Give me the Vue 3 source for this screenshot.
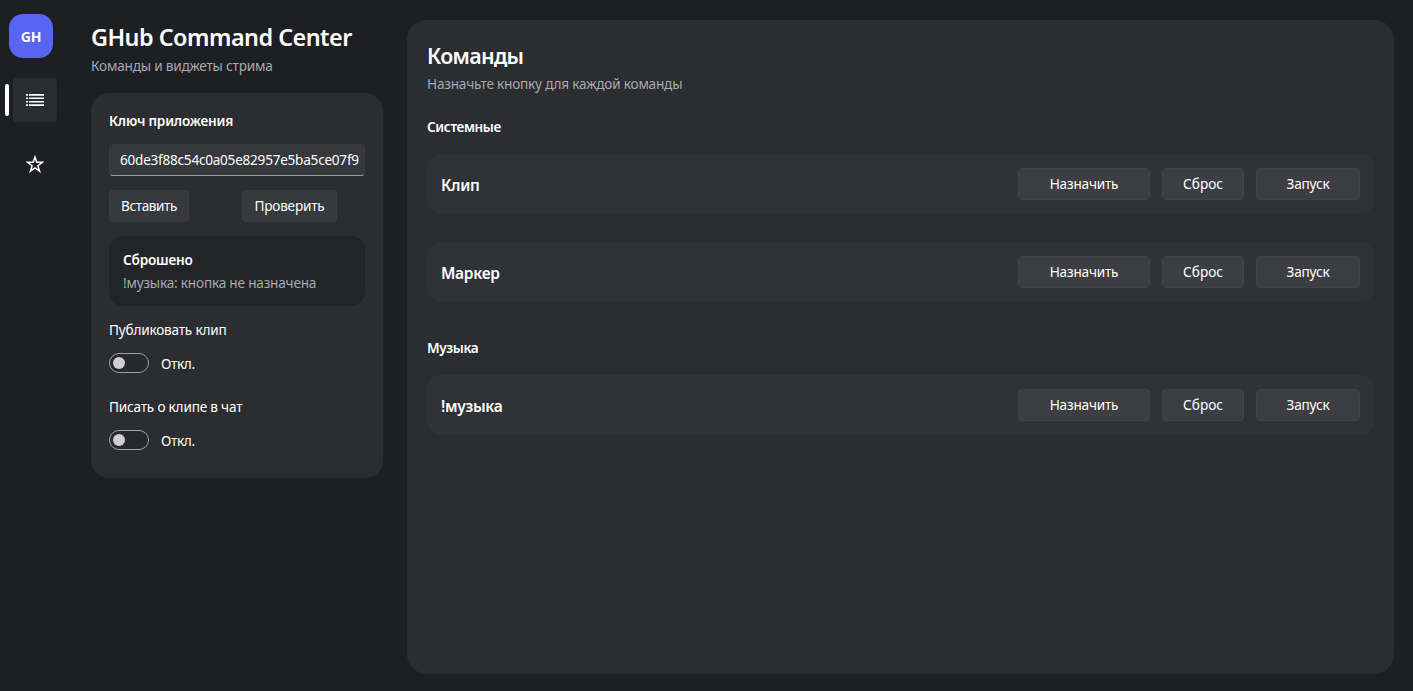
<template>
  <div class="app">
    <nav class="rail">
      <div class="logo">GH</div>
      <div class="rail-item active">
        <span class="rail-marker"></span>
        <button class="rail-button" aria-label="Команды">
          <svg viewBox="0 0 18 14" width="18" height="14" fill="currentColor">
            <path d="M0 1.1h2v1.7H0zM0 4.5h2v1.6H0zM0 7.9h2v1.6H0zM0 11.2h2v1.7H0zM3 1.1h15v1.7H3zM3 4.5h15v1.6H3zM3 7.9h15v1.6H3zM3 11.2h15v1.7H3z"/>
          </svg>
        </button>
      </div>
      <div class="rail-item">
        <span class="rail-marker"></span>
        <button class="rail-button" aria-label="Избранное">
          <svg viewBox="0 0 18 18" width="18" height="18" fill="none" stroke="currentColor" stroke-width="1.5">
            <path d="M9 2l1.8 5.2h5.6l-4.5 3.5 1.7 5.5L9 12.9l-4.6 3.3 1.7-5.5-4.5-3.5h5.6z"/>
          </svg>
        </button>
      </div>
    </nav>

    <aside class="sidebar">
      <h1 class="app-title">GHub Command Center</h1>
      <p class="app-subtitle">Команды и виджеты стрима</p>

      <section class="settings">
        <h3 class="label">Ключ приложения</h3>
        <input v-model="appKey" class="key-input" type="text" spellcheck="false" />
        <div class="key-actions">
          <div><button class="btn paste">Вставить</button></div>
          <div><button class="btn check">Проверить</button></div>
        </div>
        <div class="status">
          <div class="status-title">{{ status.title }}</div>
          <div class="status-text">{{ status.text }}</div>
        </div>
        <div v-for="option in options" :key="option.id" class="option">
          <div class="option-label">{{ option.label }}</div>
          <div class="option-control">
            <button
              class="toggle"
              :class="{ on: option.enabled }"
              role="switch"
              :aria-checked="option.enabled"
              @click="option.enabled = !option.enabled"
            >
              <span class="toggle-knob"></span>
            </button>
            <span class="option-state">{{ option.enabled ? 'Вкл.' : 'Откл.' }}</span>
          </div>
        </div>
      </section>
    </aside>

    <main class="panel">
      <h2 class="panel-title">Команды</h2>
      <p class="panel-subtitle">Назначьте кнопку для каждой команды</p>

      <section v-for="group in groups" :key="group.title" class="group">
        <h3 class="group-title">{{ group.title }}</h3>
        <div v-for="name in group.commands" :key="name" class="command">
          <span class="command-name">{{ name }}</span>
          <button class="btn assign" @click="assign(name)">Назначить</button>
          <button class="btn reset" @click="reset(name)">Сброс</button>
          <button class="btn run">Запуск</button>
        </div>
      </section>
    </main>
  </div>
</template>

<script setup>
import { reactive, ref } from 'vue'

const appKey = ref('60de3f88c54c0a05e82957e5ba5ce07f9')

const status = reactive({
  title: 'Сброшено',
  text: '!музыка: кнопка не назначена'
})

const options = reactive([
  { id: 'publish', label: 'Публиковать клип', enabled: false },
  { id: 'chat', label: 'Писать о клипе в чат', enabled: false }
])

const groups = [
  { title: 'Системные', commands: ['Клип', 'Маркер'] },
  { title: 'Музыка', commands: ['!музыка'] }
]

const assign = (name) => {
  status.title = 'Назначение'
  status.text = `${name}: нажмите кнопку`
}

const reset = (name) => {
  status.title = 'Сброшено'
  status.text = `${name}: кнопка не назначена`
}
</script>

<style>
body {
  background: #1e1f22;
}
</style>

<style scoped>
.app {
  display: flex;
  box-sizing: border-box;
  height: 100vh;
  background: #1e1f23;
  color: #fff;
  font-family: "Segoe UI", "Noto Sans", "Open Sans", sans-serif;
  font-size: 13.6px;
  line-height: 20px;
  letter-spacing: -0.2px;
  overflow: hidden;
}

h1, h2, h3, p {
  margin: 0;
}

button, input {
  font: inherit;
  letter-spacing: inherit;
  color: inherit;
  box-sizing: border-box;
}

/* Navigation rail */
.rail {
  flex: 0 0 91px;
  padding-top: 14px;
}

.logo {
  width: 44px;
  height: 44px;
  margin: 0 0 20px 9px;
  border-radius: 14px;
  background: #5865f2;
  font-size: 14px;
  font-weight: 700;
  line-height: 46px;
  text-align: center;
}

.rail-item {
  display: flex;
  align-items: center;
  gap: 4px;
  padding-left: 5px;
  margin-bottom: 20px;
}

.rail-marker {
  width: 4px;
  height: 32px;
  border-radius: 2px;
}

.active .rail-marker {
  background: #fff;
}

.rail-button {
  display: flex;
  align-items: center;
  justify-content: center;
  width: 44px;
  height: 44px;
  padding: 0;
  border: none;
  border-radius: 4px;
  background: none;
}

.active .rail-button {
  background: #2b2d31;
}

/* Left column */
.sidebar {
  flex: 0 0 292px;
  padding-top: 20px;
}

.app-title {
  font-size: 23.4px;
  font-weight: 600;
  line-height: 35px;
  letter-spacing: -0.52px;
  white-space: nowrap;
}

.app-subtitle,
.panel-subtitle {
  padding-top: 1px;
  color: #a7a9ae;
}

.settings {
  margin-top: 17px;
  padding: 18px 18px 28px;
  border-radius: 18px;
  background: #2b2d31;
}

.label {
  font-size: 13.6px;
  font-weight: 600;
}

.key-input {
  display: block;
  width: 100%;
  height: 32px;
  margin-top: 13px;
  padding: 0 5px 1px 10px;
  border: 1px solid #3a3b3f;
  border-bottom-color: #9a9b9d;
  border-radius: 4px;
  background: #37383c;
  letter-spacing: -0.25px;
  outline: none;
}

.key-actions {
  display: grid;
  grid-template-columns: 133px 1fr;
  margin-top: 14px;
}

.btn {
  display: block;
  height: 32px;
  padding: 0;
  border: 1px solid #3d3e42;
  border-radius: 4px;
  background: #38393d;
  line-height: 20px;
  white-space: nowrap;
}

.paste {
  width: 80px;
  letter-spacing: -0.4px;
}

.check {
  width: 95px;
}

.status {
  margin-top: 14px;
  padding: 14px 14px 13px;
  border-radius: 14px;
  background: #232428;
}

.status-title {
  font-weight: 600;
}

.status-text {
  margin-top: 3px;
  color: #a7a9ae;
}

.option {
  margin-top: 14px;
}

.option + .option {
  margin-top: 24px;
}

.option-control {
  display: flex;
  align-items: center;
  gap: 12px;
  height: 20px;
  margin-top: 13px;
}

.toggle {
  display: flex;
  align-items: center;
  width: 40px;
  height: 20px;
  padding: 0 3px;
  border: 1px solid #a0a1a3;
  border-radius: 10px;
  background: #27292c;
}

.toggle.on {
  justify-content: flex-end;
  background: #5865f2;
}

.toggle-knob {
  width: 12px;
  height: 12px;
  border-radius: 50%;
  background: #cfcfd0;
}

.option-state {
  padding-top: 2px;
  letter-spacing: -0.35px;
}

/* Commands panel */
.panel {
  flex: 1;
  margin: 20px 19px 17px 24px;
  padding: 18px 20px 20px;
  border-radius: 20px;
  background: #2b2d31;
}

.panel-title {
  font-size: 21.4px;
  font-weight: 600;
  line-height: 35px;
  letter-spacing: -0.7px;
}

.group {
  margin-top: 23px;
}

.group + .group {
  margin-top: 36px;
}

.group-title {
  margin-bottom: 17px;
  font-size: 13.6px;
  font-weight: 600;
  letter-spacing: -0.4px;
}

.command {
  display: flex;
  align-items: center;
  gap: 12px;
  height: 60px;
  padding: 0 14px;
  box-sizing: border-box;
  border-radius: 14px;
  background: #313237;
}

.command + .command {
  margin-top: 28px;
}

.command-name {
  flex: 1;
  padding-top: 2px;
  font-size: 15.5px;
  font-weight: 600;
  letter-spacing: -0.3px;
}

.command .btn {
  border-color: #424348;
  background: #3d3e43;
}

.assign {
  width: 132px;
}

.reset {
  width: 82px;
  letter-spacing: 0;
}

.run {
  width: 104px;
}
</style>
